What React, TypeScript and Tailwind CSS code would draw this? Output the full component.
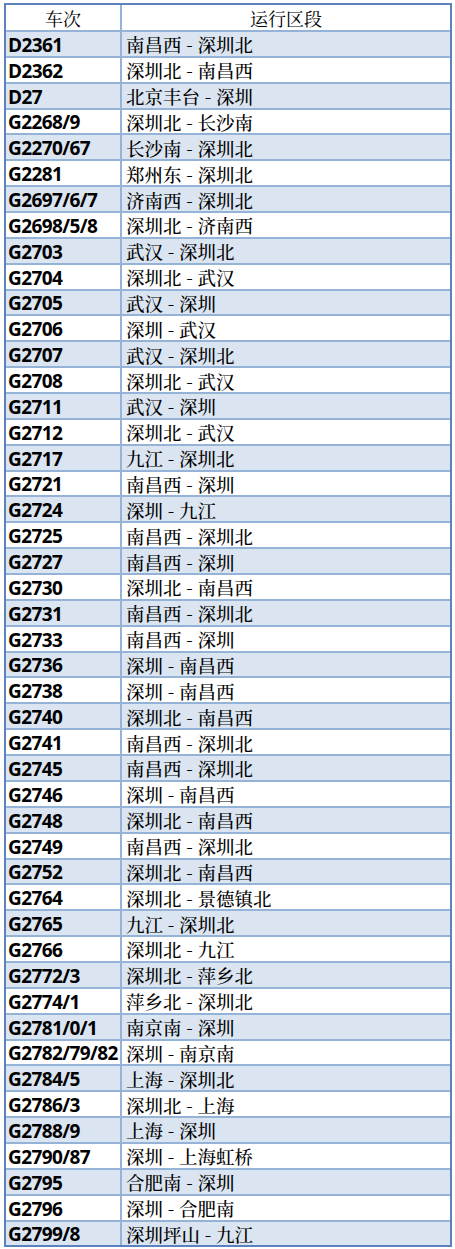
const rows: [string, string][] = [
  ["D2361", "南昌西 - 深圳北"],
  ["D2362", "深圳北 - 南昌西"],
  ["D27", "北京丰台 - 深圳"],
  ["G2268/9", "深圳北 - 长沙南"],
  ["G2270/67", "长沙南 - 深圳北"],
  ["G2281", "郑州东 - 深圳北"],
  ["G2697/6/7", "济南西 - 深圳北"],
  ["G2698/5/8", "深圳北 - 济南西"],
  ["G2703", "武汉 - 深圳北"],
  ["G2704", "深圳北 - 武汉"],
  ["G2705", "武汉 - 深圳"],
  ["G2706", "深圳 - 武汉"],
  ["G2707", "武汉 - 深圳北"],
  ["G2708", "深圳北 - 武汉"],
  ["G2711", "武汉 - 深圳"],
  ["G2712", "深圳北 - 武汉"],
  ["G2717", "九江 - 深圳北"],
  ["G2721", "南昌西 - 深圳"],
  ["G2724", "深圳 - 九江"],
  ["G2725", "南昌西 - 深圳北"],
  ["G2727", "南昌西 - 深圳"],
  ["G2730", "深圳北 - 南昌西"],
  ["G2731", "南昌西 - 深圳北"],
  ["G2733", "南昌西 - 深圳"],
  ["G2736", "深圳 - 南昌西"],
  ["G2738", "深圳 - 南昌西"],
  ["G2740", "深圳北 - 南昌西"],
  ["G2741", "南昌西 - 深圳北"],
  ["G2745", "南昌西 - 深圳北"],
  ["G2746", "深圳 - 南昌西"],
  ["G2748", "深圳北 - 南昌西"],
  ["G2749", "南昌西 - 深圳北"],
  ["G2752", "深圳北 - 南昌西"],
  ["G2764", "深圳北 - 景德镇北"],
  ["G2765", "九江 - 深圳北"],
  ["G2766", "深圳北 - 九江"],
  ["G2772/3", "深圳北 - 萍乡北"],
  ["G2774/1", "萍乡北 - 深圳北"],
  ["G2781/0/1", "南京南 - 深圳"],
  ["G2782/79/82", "深圳 - 南京南"],
  ["G2784/5", "上海 - 深圳北"],
  ["G2786/3", "深圳北 - 上海"],
  ["G2788/9", "上海 - 深圳"],
  ["G2790/87", "深圳 - 上海虹桥"],
  ["G2795", "合肥南 - 深圳"],
  ["G2796", "深圳 - 合肥南"],
  ["G2799/8", "深圳坪山 - 九江"],
];

const cjk = "font-['Noto_Serif_CJK_SC','Noto_Sans_CJK_SC',serif]";

export default function App() {
  return (
    <div className="bg-white w-[455px] h-[1249px] pt-[3px] pl-[4px]">
      <div className="w-[448px] border-2 border-[#5b82bd] bg-white text-black">
        {/* Header */}
        <div className={`flex h-[25px] text-[18px] ${cjk}`}>
          <div className="w-[116px] shrink-0 border-r-2 border-[#95b3d7] flex items-end justify-center leading-none pb-[3px]">
            车次
          </div>
          <div className="flex-1 flex items-end justify-center leading-none pb-[3px]">运行区段</div>
        </div>

        {rows.map(([no, route], i) => (
          <div
            key={no}
            className={`flex h-[25.87px] border-t-2 border-[#95b3d7] ${i % 2 === 0 ? "bg-[#dbe5f1]" : "bg-white"}`}
          >
            <div className="w-[116px] shrink-0 border-r-2 border-[#95b3d7] flex items-end pl-[2px] pb-[1px] font-['Open_Sans',sans-serif] font-bold text-[19px] leading-none tracking-[-0.6px] whitespace-nowrap">
              {no}
            </div>
            <div className={`flex-1 flex items-end pl-[4px] pb-[2px] text-[18.5px] font-medium leading-none ${cjk}`}>
              {route}
            </div>
          </div>
        ))}
      </div>
    </div>
  );
}
